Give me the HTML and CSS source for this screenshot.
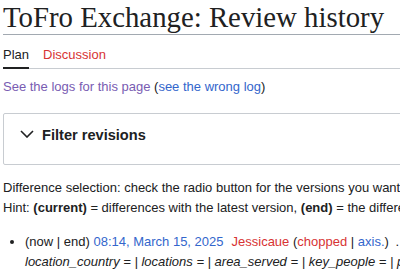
FILE: index.html
```html
<!DOCTYPE html>
<html lang="en">
<head>
<meta charset="utf-8">
<title>ToFro Exchange: Review history</title>
<link rel="stylesheet" href="styles.css">
</head>
<body>
<div class="page">
  <h1 class="title">ToFro Exchange: Review history</h1>
  <nav class="tabs">
    <a class="tab tab-active">Plan</a>
    <a class="tab tab-new">Discussion</a>
  </nav>
  <p class="logs"><a class="visited">See the logs for this page</a> (<a class="link">see the wrong log</a>)</p>
  <div class="filter">
    <svg class="chev" width="14" height="8" viewBox="0 0 14 8"><path d="M1 1 L7 7 L13 1" fill="none" stroke="#202122" stroke-width="1.6"/></svg>
    <span class="filter-label">Filter revisions</span>
  </div>
  <p class="line first">Difference selection: check the radio button for the versions you want to compare and hit enter or the button at the bottom.</p>
  <p class="line">Hint: <b>(current)</b> = differences with the latest version, <b>(end)</b> = the differences with preceding version.</p>
  <ul class="history">
    <li>(now | end) <a class="link">08:14, March 15, 2025</a><span class="sep"></span><a class="new">Jessicaue</a> (<a class="new">chopped</a> | <a class="link">axis.</a>) <span class="dots">. .</span> <span class="size">(1,024 bytes)</span><br><i class="summary">location_country = | locations = | area_served = | key_people = | products = | services =</i></li>
  </ul>
</div>
</body>
</html>
```
FILE: styles.css
```css
html, body {
  margin: 0;
  padding: 0;
  overflow: hidden;
  background: #fff;
}
.page {
  width: 1100px;
  padding-left: 3px;
  font-family: "Liberation Sans", Arial, sans-serif;
  font-size: 13px;
  line-height: 20px;
  color: #202122;
}
.title {
  margin: 0;
  font-family: "Liberation Serif", "Times New Roman", serif;
  font-weight: normal;
  font-size: 28.8px;
  line-height: 34px;
  color: #202122;
  border-bottom: 1px solid #a2a9b1;
}
.tabs {
  display: flex;
  gap: 14px;
  border-bottom: 1px solid #c8ccd1;
}
.tab {
  padding: 10px 0 2px;
  border-bottom: 2px solid transparent;
  margin-bottom: -1px;
}
.tab-active {
  color: #202122;
  border-bottom-color: #202122;
}
.tab-new {
  color: #d73333;
}
.logs {
  margin: 8px 0 0;
  white-space: nowrap;
}
.visited { color: #795cb2; }
.link { color: #3366cc; }
.new { color: #d73333; }
.filter {
  margin-top: 16px;
  border: 1px solid #c8ccd1;
  border-radius: 2px;
  padding: 11px 16px 19px;
  display: flex;
  align-items: center;
  gap: 8px;
  line-height: 20px;
}
.chev {
  display: block;
  margin-top: -3px;
}
.filter-label {
  font-weight: bold;
  font-size: 14.6px;
}
.line {
  margin: 0;
  white-space: nowrap;
}
.line.first {
  margin-top: 13px;
}
.history {
  margin: 14px 0 0;
  padding-left: 22px;
  list-style: disc;
}
.history li {
  white-space: nowrap;
}
.sep {
  display: inline-block;
  width: 8px;
}
.dots { margin-left: 3px; }
```
